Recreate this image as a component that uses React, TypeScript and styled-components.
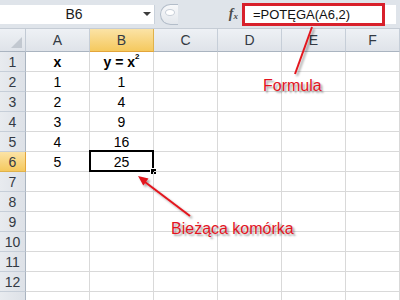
import React from 'react';
import styled, { createGlobalStyle, css } from 'styled-components';

const GlobalStyle = createGlobalStyle`
  html, body {
    margin: 0;
    padding: 0;
    background: #ffffff;
  }
  body {
    width: 400px;
    height: 300px;
    overflow: hidden;
    font-family: 'Liberation Sans', Arial, sans-serif;
  }
`;

const COLS = ['A', 'B', 'C', 'D', 'E', 'F'];
const ROW_COUNT = 13;

const data: Record<string, React.ReactNode> = {
  A1: 'x',
  B1: (
    <>
      y = x<sup>2</sup>
    </>
  ),
  A2: '1', B2: '1',
  A3: '2', B3: '4',
  A4: '3', B4: '9',
  A5: '4', B5: '16',
  A6: '5', B6: '25',
};

const App = () => {
  const rows = Array.from({ length: ROW_COUNT }, (_, i) => i + 1);

  return (
    <Page>
      <GlobalStyle />
      <FormulaBar>
        <NameBox>
          <NameText>B6</NameText>
          <DropArrow />
        </NameBox>
        <Grip>
          <GripDot />
        </Grip>
        <FxArea>
          <Fx>
            f<sub>x</sub>
          </Fx>
        </FxArea>
        <FormulaInput>=POTĘGA(A6,2)</FormulaInput>
      </FormulaBar>

      <Sheet>
        <Corner>
          <CornerTriangle />
        </Corner>
        {COLS.map((c) => (
          <ColHeader key={c} active={c === 'B'}>
            {c}
          </ColHeader>
        ))}
        {rows.map((r) => (
          <React.Fragment key={r}>
            {/* last row is only a sliver at the bottom edge, its number hidden */}
            <RowHeader active={r === 6}>{r < ROW_COUNT ? r : ''}</RowHeader>
            {COLS.map((c) => {
              const id = `${c}${r}`;
              return (
                <Cell key={id} bold={r === 1} current={id === 'B6'}>
                  {data[id]}
                </Cell>
              );
            })}
          </React.Fragment>
        ))}
      </Sheet>

      <Overlay>
        <RedBox />
        <Arrows width="400" height="300" viewBox="0 0 400 300">
          <defs>
            <filter id="shadow" x="-20%" y="-20%" width="140%" height="140%">
              <feDropShadow dx="2" dy="2" stdDeviation="1.2" floodColor="#000" floodOpacity="0.35" />
            </filter>
          </defs>
          <g filter="url(#shadow)" stroke="#e3141f" strokeWidth="2" fill="#e3141f">
            <line x1="312" y1="27" x2="295" y2="74" />
            <line x1="190" y1="216" x2="145" y2="182" />
            <polygon points="138,176 148.5,178.6 143.3,185.5" stroke="none" />
          </g>
        </Arrows>
        <Label style={{ left: 263, top: 77 }}>Formula</Label>
        <Label style={{ left: 171, top: 220 }}>Bieżąca komórka</Label>
      </Overlay>
    </Page>
  );
};

const Page = styled.div`
  position: relative;
  width: 400px;
  height: 300px;
  overflow: hidden;
  background: #ffffff;
`;

const FormulaBar = styled.div`
  display: flex;
  align-items: center;
  height: 29px;
  box-sizing: border-box;
  padding: 4px 4px 4px 0;
  background: #dfe4ea;
  border-bottom: 1px solid #c5ccd5;
`;

const NameBox = styled.div`
  display: flex;
  align-items: center;
  width: 155px;
  height: 19px;
  background: #ffffff;
  box-sizing: border-box;
  border-right: 1px solid #c9d1db;
`;

const NameText = styled.span`
  flex: 1;
  text-align: center;
  font-size: 14px;
  color: #1a1a1a;
  padding-left: 5px;
`;

const DropArrow = styled.span`
  width: 0;
  height: 0;
  margin-right: 3px;
  border-left: 4px solid transparent;
  border-right: 4px solid transparent;
  border-top: 4px solid #3c3c3c;
`;

const Grip = styled.div`
  display: flex;
  align-items: center;
  justify-content: flex-start;
  width: 18px;
  height: 21px;
  margin-left: 5px;
  box-sizing: border-box;
  border: 1px solid #b3bdc9;
  border-right: none;
  border-radius: 11px 0 0 11px;
  background: linear-gradient(#f7f8fa, #e3e7ec);
`;

const GripDot = styled.div`
  width: 8px;
  height: 5px;
  margin-left: 4px;
  margin-top: -4px;
  border-radius: 50%;
  background: #ffffff;
  border: 1px solid #c8cfd8;
`;

const FxArea = styled.div`
  display: flex;
  align-items: center;
  justify-content: flex-end;
  width: 64px;
  height: 21px;
  padding-right: 4px;
  box-sizing: border-box;
`;

const Fx = styled.span`
  font-family: 'Liberation Serif', 'Times New Roman', serif;
  font-style: italic;
  font-weight: bold;
  font-size: 14px;
  color: #4b4b4b;

  sub {
    font-size: 9px;
    vertical-align: -1px;
  }
`;

const FormulaInput = styled.div`
  flex: 1;
  height: 19px;
  display: flex;
  align-items: center;
  padding-left: 11px;
  background: #ffffff;
  font-size: 13px;
  color: #111;
`;

const Sheet = styled.div`
  display: grid;
  grid-template-columns: 26px repeat(5, 64px) 1fr;
  grid-template-rows: 23px;
  grid-auto-rows: 20px;
  font-size: 14px;
`;

const headerBase = css`
  display: flex;
  align-items: center;
  justify-content: center;
  box-sizing: border-box;
  color: #333a44;
  font-size: 14px;
`;

const Corner = styled.div`
  ${headerBase};
  position: relative;
  background: linear-gradient(#eef1f5, #dfe3e9);
  border-right: 1px solid #c2cad4;
  border-bottom: 1px solid #aab4c0;
`;

const CornerTriangle = styled.div`
  position: absolute;
  right: 3px;
  bottom: 3px;
  width: 0;
  height: 0;
  border-left: 11px solid transparent;
  border-bottom: 11px solid #c2c8d0;
`;

const ColHeader = styled.div<{ active?: boolean }>`
  ${headerBase};
  background: ${(p) =>
    p.active ? 'linear-gradient(#fbe3a6, #f5c95e)' : 'linear-gradient(#eef1f5, #dfe3e9)'};
  border-right: 1px solid ${(p) => (p.active ? '#e0b24a' : '#c6ced8')};
  border-bottom: 1px solid ${(p) => (p.active ? '#e3a53a' : '#aab4c0')};
`;

const RowHeader = styled.div<{ active?: boolean }>`
  ${headerBase};
  background: ${(p) =>
    p.active ? 'linear-gradient(#fbe3a6, #f5c95e)' : 'linear-gradient(90deg, #e8ebef, #dde1e7)'};
  border-right: 1px solid ${(p) => (p.active ? '#e3a53a' : '#aab4c0')};
  border-bottom: 1px solid ${(p) => (p.active ? '#e0b24a' : '#c6ced8')};
`;

const Cell = styled.div<{ bold?: boolean; current?: boolean }>`
  position: relative;
  display: flex;
  align-items: center;
  justify-content: center;
  box-sizing: border-box;
  border-right: 1px solid #d9d9d9;
  border-bottom: 1px solid #d9d9d9;
  color: #000;
  font-weight: ${(p) => (p.bold ? 'bold' : 'normal')};

  sup {
    font-size: 8px;
    align-self: flex-start;
    margin-top: 0;
  }

  ${(p) =>
    p.current &&
    css`
      &::before {
        content: '';
        position: absolute;
        top: -2px;
        left: -1px;
        right: -1px;
        bottom: -1px;
        border: 2px solid #000;
      }
      &::after {
        content: '';
        position: absolute;
        right: -4px;
        bottom: -4px;
        width: 5px;
        height: 5px;
        background: #000;
        border: 1px solid #fff;
      }
    `}
`;

const Overlay = styled.div`
  position: absolute;
  inset: 0;
  pointer-events: none;
`;

const RedBox = styled.div`
  position: absolute;
  left: 242px;
  top: 3px;
  width: 143px;
  height: 23px;
  box-sizing: border-box;
  border: 3px solid #d8202b;
`;

const Arrows = styled.svg`
  position: absolute;
  left: 0;
  top: 0;
`;

const Label = styled.span`
  position: absolute;
  font-family: 'Liberation Sans', Arial, sans-serif;
  font-size: 16px;
  line-height: 18px;
  color: #e3141f;
  white-space: nowrap;
  text-shadow: 2px 2px 2px rgba(0, 0, 0, 0.35);
`;

export default App;
